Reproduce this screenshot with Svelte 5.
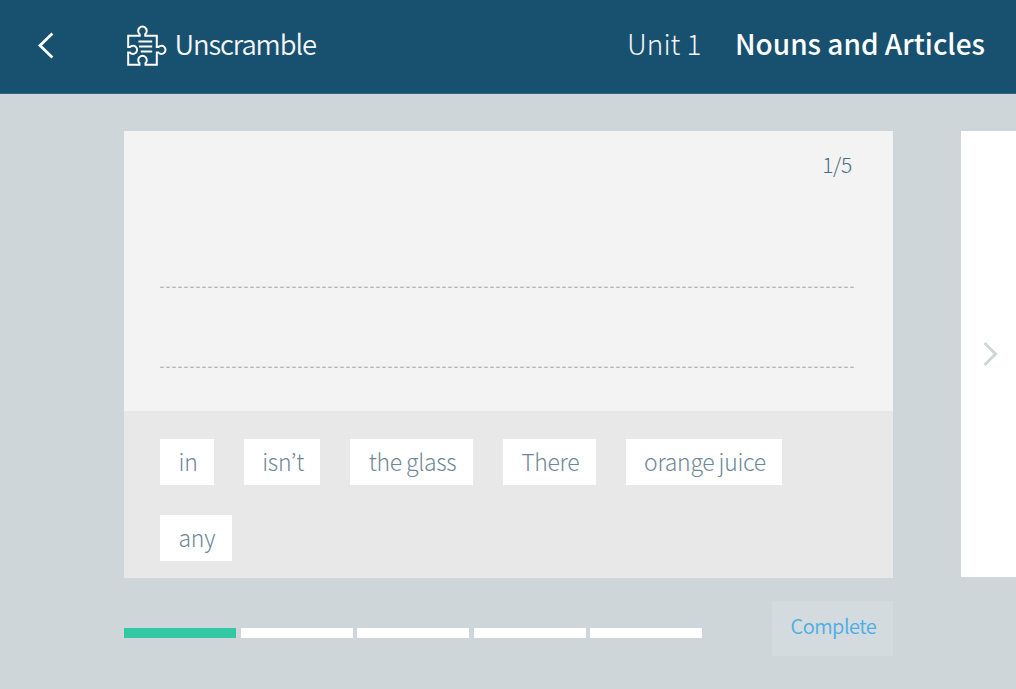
<script>
	let unit = 'Unit 1';
	let lesson = 'Nouns and Articles';
	let current = 1;
	let total = 5;
	let words = ['in', 'isn’t', 'the glass', 'There', 'orange juice', 'any'];
	let lines = [1, 2];
	let steps = Array.from({ length: total }, (_, i) => i + 1);
</script>

<div class="page">
	<header>
		<button class="back" aria-label="Back">
			<svg width="20" height="30" viewBox="0 0 20 30">
				<path d="M16.4 3.6 L4 15.6 L16.4 27.4" />
			</svg>
		</button>
		<div class="activity">
			<svg class="puzzle" width="42" height="44" viewBox="0 0 42 44">
				<path
					d="M3.2 12.8 H14.7 V11.2 A4.3 4.3 0 1 1 20.2 11.2 V12.8 H31.8 V24 H33.4 A4.1 4.1 0 1 1 33.4 29.6 H31.8 V41.8 H20.5 V40.2 A4.3 4.3 0 1 0 14.5 40.2 V41.8 H3.2 V29.6 H5 A4.1 4.1 0 1 0 5 24 H3.2 Z"
				/>
				<path d="M13.4 18.5 H27.2 M14 23.5 H27.2 M15.8 28.5 H27.2" />
			</svg>
			<h1>Unscramble</h1>
		</div>
		<span class="unit">{unit}</span>
		<span class="lesson">{lesson}</span>
	</header>

	<main>
		<section class="card">
			<div class="answer">
				<span class="count">{current}/{total}</span>
				{#each lines as line}
					<div class="line"></div>
				{/each}
			</div>
			<div class="words">
				{#each words as word}
					<button class="word">{word}</button>
				{/each}
			</div>
		</section>
		<button class="next" aria-label="Next">
			<svg width="20" height="30" viewBox="0 0 20 30">
				<path d="M4.5 4 L15.5 15 L4.5 26" />
			</svg>
		</button>
	</main>

	<footer>
		<div class="progress">
			{#each steps as step}
				<div class="step" class:done={step <= current}></div>
			{/each}
		</div>
		<button class="complete">Complete</button>
	</footer>
</div>

<style>
	:global(body) {
		margin: 0;
		background: #ced6d9;
	}

	.page {
		width: 1016px;
		height: 689px;
		overflow: hidden;
		background: #ced6d9;
		font-family: 'Noto Sans CJK KR', 'Noto Sans', sans-serif;
	}

	button {
		border: 0;
		margin: 0;
		padding: 0;
		font: inherit;
		background: none;
	}

	svg {
		display: block;
		fill: none;
	}

	header {
		box-sizing: border-box;
		height: 94px;
		padding: 0 31px 4px 36px;
		display: flex;
		align-items: center;
		color: #f3f5f6;
		background: #18506f;
		border-bottom: 1px solid #34637f;
		font-size: 28px;
		line-height: 36px;
		font-weight: 300;
		white-space: nowrap;
	}

	.back svg {
		stroke: #fff;
		stroke-width: 2.8;
	}

	.activity {
		display: flex;
		align-items: center;
		margin-left: 69px;
		gap: 7.5px;
		flex: 1;
	}

	.puzzle {
		stroke: #fff;
		stroke-width: 2;
	}

	h1 {
		margin: 0;
		padding-bottom: 4px;
		font-size: 27.4px;
		font-weight: 350;
		letter-spacing: -1.1px;
	}

	.unit,
	.lesson {
		padding-bottom: 4px;
	}

	.lesson {
		margin-left: 33.4px;
		color: #fff;
		font-weight: 500;
	}

	main {
		display: flex;
		justify-content: space-between;
		margin: 37px 0 0 124.4px;
		height: 447px;
	}

	.card {
		width: 769px;
	}

	.answer {
		box-sizing: border-box;
		height: 280px;
		padding: 18px 39px 0 36px;
		background: #f3f3f3;
	}

	.count {
		display: block;
		height: 30px;
		margin-right: 2.6px;
		line-height: 30px;
		text-align: right;
		font-size: 21px;
		font-weight: 300;
		letter-spacing: -0.4px;
		color: #4c6b80;
	}

	/* 4px dashes with a soft upper edge */
	.line {
		height: 2px;
		margin-bottom: 78px;
		background:
			repeating-linear-gradient(90deg, #dedede 0 4px, transparent 4px 6px) 0 0 / 100% 1px no-repeat,
			repeating-linear-gradient(90deg, #c8c8c8 0 1px, #b0b0b0 1px 3px, #c8c8c8 3px 4px, transparent 4px 6px) 0 1px / 100% 1px no-repeat;
	}

	.count + .line {
		margin-top: 107px;
	}

	.words {
		box-sizing: border-box;
		height: 167px;
		padding: 28px 36px 0;
		display: flex;
		flex-wrap: wrap;
		align-content: flex-start;
		gap: 30px;
		background: #e8e8e8;
	}

	.word {
		box-sizing: border-box;
		height: 46px;
		padding: 0 16.5px 1px 18.2px;
		line-height: 45px;
		font-size: 23px;
		font-weight: 300;
		letter-spacing: -0.3px;
		word-spacing: -0.6px;
		color: #708897;
		background: #fff;
	}

	.next {
		width: 55px;
		height: 446px;
		padding-left: 19px;
		background: #fff;
	}

	.next svg {
		stroke: #ced6d9;
		stroke-width: 3;
	}

	footer {
		display: flex;
		align-items: center;
		justify-content: space-between;
		width: 769px;
		height: 55px;
		margin: 23px 0 0 124.4px;
	}

	.progress {
		display: flex;
		gap: 4.6px;
		padding-top: 9px;
	}

	.step {
		width: 111.9px;
		height: 10px;
		background: #fff;
	}

	.done {
		background: #33c8a4;
	}

	.complete {
		box-sizing: border-box;
		width: 121px;
		height: 55px;
		padding: 0 0 5px 1px;
		line-height: 50px;
		font-size: 20px;
		font-weight: 350;
		letter-spacing: -0.5px;
		color: #4aaee6;
		background: #d4dbde;
	}
</style>
